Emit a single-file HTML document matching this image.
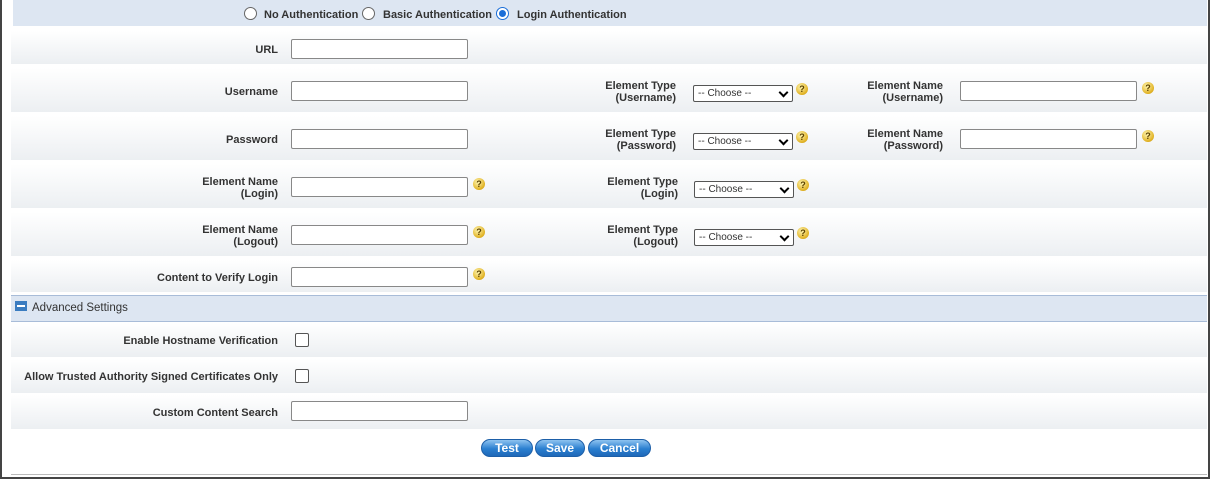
<!DOCTYPE html>
<html><head><style>
body{margin:0;width:1210px;height:481px;background:#fff;position:relative;overflow:hidden;font-family:"Liberation Sans",Arial,sans-serif;font-size:11px;font-weight:bold;color:#333}
.a{position:absolute}
.frame{left:0;top:0;width:1206px;height:477px;border:2px solid #444;border-top:none;box-sizing:content-box}
.row{position:absolute;left:11px;right:3px;background:linear-gradient(#fff,#eceff2)}
.lbl{position:absolute;text-align:right;line-height:12px}
.inp{position:absolute;width:177px;height:20px;border:1px solid #888;border-radius:2px;background:#fff;box-sizing:border-box}
.sel{position:absolute;width:100px;height:17px;border:1px solid #555;border-radius:2px;background:#fff;box-sizing:border-box;font-weight:normal;font-size:10px;padding-left:4px;line-height:15px}
.sel:after{content:"";position:absolute;right:5px;top:3px;width:5px;height:5px;border-right:2px solid #000;border-bottom:2px solid #000;transform:rotate(45deg)}
.h{position:absolute;width:12px;height:12px;border-radius:50%;background:radial-gradient(circle at 40% 35%,#fff6b0,#e0b020 70%,#a07810);color:#5a4000;font-size:9px;text-align:center;line-height:12px}
.cb{position:absolute;width:12px;height:12px;border:1px solid #555;border-radius:2px;background:#fff}
.rad{position:absolute;width:11px;height:11px;border:1px solid #666;border-radius:50%;background:#fff;top:7px}
.btn{position:absolute;top:439px;height:16px;border-radius:9px;background:linear-gradient(#8ec3f0,#2a7fd0 55%,#1f68b8);color:#fff;font-size:12px;text-align:center;line-height:16px;border:1px solid #1d5fa8}
</style></head><body>
<div class="a frame"></div>
<div class="a" style="left:13px;top:0;right:3px;height:26px;background:#dde6f2"></div>
<div class="rad" style="left:244px"></div><div class="a" style="left:264px;top:9px">No Authentication</div>
<div class="rad" style="left:362px"></div><div class="a" style="left:383px;top:9px">Basic Authentication</div>
<div class="rad" style="left:496px;border-color:#1a6ed8"><div style="width:7px;height:7px;border-radius:50%;background:#1a6ed8;margin:2px"></div></div><div class="a" style="left:517px;top:9px">Login Authentication</div>

<div class="row" style="top:31px;height:33px"></div>
<div class="row" style="top:68px;height:44px"></div>
<div class="row" style="top:116px;height:44px"></div>
<div class="row" style="top:164px;height:44px"></div>
<div class="row" style="top:212px;height:44px"></div>
<div class="row" style="top:260px;height:32px"></div>

<div class="lbl" style="right:932px;top:44px">URL</div><div class="inp" style="left:291px;top:39px"></div>
<div class="lbl" style="right:932px;top:86px">Username</div><div class="inp" style="left:291px;top:81px"></div>
<div class="lbl" style="right:534px;top:80px">Element Type<br>(Username)</div><div class="sel" style="left:693px;top:85px">-- Choose --</div><div class="h" style="left:796px;top:83px">?</div>
<div class="lbl" style="right:267px;top:80px">Element Name<br>(Username)</div><div class="inp" style="left:960px;top:81px"></div><div class="h" style="left:1142px;top:82px">?</div>

<div class="lbl" style="right:932px;top:134px">Password</div><div class="inp" style="left:291px;top:129px"></div>
<div class="lbl" style="right:534px;top:128px">Element Type<br>(Password)</div><div class="sel" style="left:693px;top:133px">-- Choose --</div><div class="h" style="left:796px;top:131px">?</div>
<div class="lbl" style="right:267px;top:128px">Element Name<br>(Password)</div><div class="inp" style="left:960px;top:129px"></div><div class="h" style="left:1142px;top:130px">?</div>

<div class="lbl" style="right:932px;top:176px">Element Name<br>(Login)</div><div class="inp" style="left:291px;top:177px"></div><div class="h" style="left:473px;top:178px">?</div>
<div class="lbl" style="right:532px;top:176px">Element Type<br>(Login)</div><div class="sel" style="left:694px;top:181px">-- Choose --</div><div class="h" style="left:797px;top:179px">?</div>

<div class="lbl" style="right:932px;top:224px">Element Name<br>(Logout)</div><div class="inp" style="left:291px;top:225px"></div><div class="h" style="left:473px;top:226px">?</div>
<div class="lbl" style="right:532px;top:224px">Element Type<br>(Logout)</div><div class="sel" style="left:694px;top:229px">-- Choose --</div><div class="h" style="left:797px;top:227px">?</div>

<div class="lbl" style="right:932px;top:272px">Content to Verify Login</div><div class="inp" style="left:291px;top:267px"></div><div class="h" style="left:473px;top:268px">?</div>

<div class="a" style="left:11px;right:3px;top:295px;height:25px;background:#dde6f2;border-top:1px solid #a8bcd8;border-bottom:1px solid #a8bcd8"></div>
<div class="a" style="left:15px;top:301px;width:12px;height:10px;background:#3a7cc0"><div style="margin:4px 2px 0;height:2px;background:#fff"></div></div>
<div class="a" style="left:32px;top:302px;font-weight:normal;font-size:11.5px">Advanced Settings</div>

<div class="row" style="top:323px;height:34px"></div>
<div class="row" style="top:359px;height:34px"></div>
<div class="row" style="top:395px;height:34px"></div>
<div class="lbl" style="right:932px;top:335px">Enable Hostname Verification</div><div class="cb" style="left:295px;top:333px"></div>
<div class="lbl" style="right:932px;top:371px">Allow Trusted Authority Signed Certificates Only</div><div class="cb" style="left:295px;top:369px"></div>
<div class="lbl" style="right:932px;top:407px">Custom Content Search</div><div class="inp" style="left:291px;top:401px"></div>

<div class="btn" style="left:481px;width:50px">Test</div>
<div class="btn" style="left:535px;width:48px">Save</div>
<div class="btn" style="left:588px;width:61px">Cancel</div>
<div class="a" style="left:11px;right:3px;top:474px;height:1px;background:#bbb"></div>
</body></html>
